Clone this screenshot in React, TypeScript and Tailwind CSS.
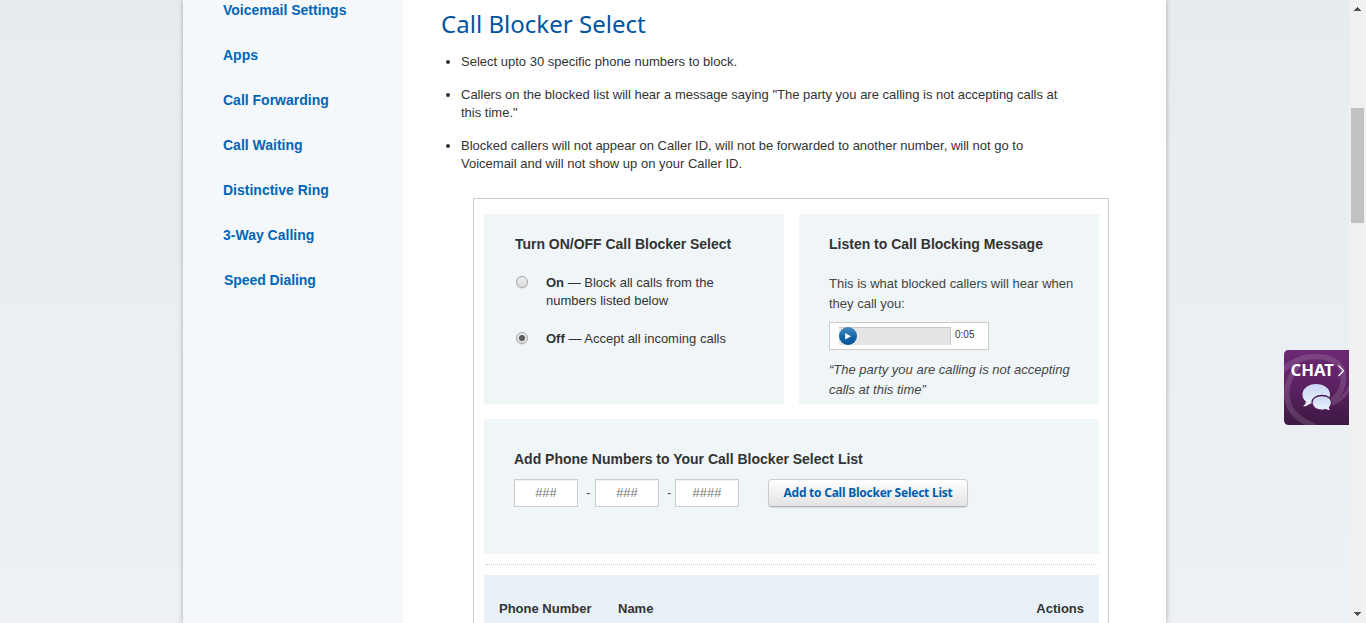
import type { ReactNode } from 'react';

const navItems = [
  'Voicemail Settings',
  'Apps',
  'Call Forwarding',
  'Call Waiting',
  'Distinctive Ring',
  '3-Way Calling',
  'Speed Dialing',
];

function Sidebar() {
  return (
    <nav className="h-full w-[220px] shrink-0 bg-[#f4f8fb] pl-10">
      <ul className="-mt-[12px]">
        {navItems.map((item) => (
          <li key={item} className="h-[45px] text-sm leading-[45px] font-bold whitespace-nowrap text-[#0066b8]">
            <a className={item === 'Speed Dialing' ? 'pl-px tracking-[-0.06px]' : ''}>{item}</a>
          </li>
        ))}
      </ul>
    </nav>
  );
}

function Bullet({ children }: { children: ReactNode }) {
  return (
    <li className="mb-[15px] flex">
      <span className="mt-[7px] mr-[11px] size-1 shrink-0 rounded-full bg-[#333]" />
      <span>{children}</span>
    </li>
  );
}

function Radio({ checked }: { checked?: boolean }) {
  return (
    <span className="flex size-3 shrink-0 items-center justify-center rounded-full border border-[#a6a6a6] bg-linear-to-b from-[#ececec] to-[#dcdcdc] shadow-[0_1px_1px_rgba(0,0,0,0.08)]">
      {checked && <span className="size-1.5 rounded-full bg-[#5c5c5c]" />}
    </span>
  );
}

function TogglePanel() {
  return (
    <section className="h-[190px] w-[300px] bg-[#f0f6f8] pt-[21px] pl-[31px]">
      <h2 className="text-sm leading-[18px] font-bold tracking-[-0.02px] whitespace-nowrap">Turn ON/OFF Call Blocker Select</h2>
      <div className="mt-[21px] flex pl-px">
        <div className="mt-[2px]"><Radio /></div>
        <p className="ml-[18px] text-[13px] leading-[18px] whitespace-nowrap">
          <b>On</b> — Block all calls from the
          <br />
          numbers listed below
        </p>
      </div>
      <div className="mt-5 flex pl-px">
        <div className="mt-[2px]"><Radio checked /></div>
        <p className="ml-[18px] text-[13px] leading-[18px] whitespace-nowrap">
          <b>Off</b> — Accept all incoming calls
        </p>
      </div>
    </section>
  );
}

function ListenPanel() {
  return (
    <section className="h-[190px] w-[300px] bg-[#f0f6f8] pt-[21px] pl-[30px] text-[#444]">
      <h2 className="text-sm leading-[18px] font-bold whitespace-nowrap text-[#333]">Listen to Call Blocking Message</h2>
      <p className="mt-[21px] text-[13px] leading-5 whitespace-nowrap">
        This is what blocked callers will hear when
        <br />
        they call you:
      </p>
      <div className="mt-2 flex h-7 w-40 border border-[#ccc] bg-white pt-1 pl-[9px]">
        <div className="h-[18px] w-28 border-t border-r border-[#c6c6c6] bg-[#e4e4e4]">
          <svg className="-mt-px block size-[18px]" viewBox="0 0 18 18">
            <defs>
              <linearGradient id="play" x1="0" y1="0" x2="0" y2="1">
                <stop offset="0" stopColor="#4489c0" />
                <stop offset="0.5" stopColor="#1669ab" />
                <stop offset="1" stopColor="#004f96" />
              </linearGradient>
            </defs>
            <circle cx="9" cy="9" r="9" fill="url(#play)" />
            <path d="M6.2 6 12 9.3 6.2 12.6Z" fill="#fff" />
          </svg>
        </div>
        <span className="ml-1 text-[10px] leading-[15px] text-[#333]">0:05</span>
      </div>
      <p className="mt-[10px] text-[13px] leading-5 whitespace-nowrap italic">
        “The party you are calling is not accepting
        <br />
        calls at this time”
      </p>
    </section>
  );
}

function DigitsInput({ placeholder }: { placeholder: string }) {
  return (
    <span className="h-7 w-16 border border-[#ccc] bg-white text-center text-[13px] leading-[26px] text-[#777] shadow-[inset_0_1px_1px_rgba(0,0,0,0.06)]">
      {placeholder}
    </span>
  );
}

function AddPanel() {
  return (
    <section className="mt-[15px] h-[135px] bg-[#f0f6f8] pt-[31px] pl-[30px]">
      <h2 className="text-sm leading-[18px] font-bold">Add Phone Numbers to Your Call Blocker Select List</h2>
      <div className="mt-[11px] flex text-[13px] leading-7 text-[#555]">
        <DigitsInput placeholder="###" />
        <span className="w-[17px] pl-[8px]">-</span>
        <DigitsInput placeholder="###" />
        <span className="w-4 pl-[8px]">-</span>
        <DigitsInput placeholder="####" />
        <button className="ml-[29px] h-7 w-[200px] rounded-[4px] border border-[#ccc] border-b-[#b0b0b0] bg-linear-to-b from-white to-[#e3e3e3] pb-px font-['Noto_Sans','Open_Sans',sans-serif] text-[12px] leading-[25px] font-bold tracking-[-0.24px] whitespace-nowrap text-[#005eb0] shadow-[0_1px_1px_rgba(0,0,0,0.1)]">
          Add to Call Blocker Select List
        </button>
      </div>
    </section>
  );
}

function ChatTab() {
  return (
    <div className="absolute top-[350px] right-[17px] h-[75px] w-[65px]">
      <svg className="block h-full w-full" viewBox="0 0 65 75">
        <defs>
          <linearGradient id="chatBg" x1="0" y1="0" x2="0" y2="1">
            <stop offset="0" stopColor="#6c2a73" />
            <stop offset="0.5" stopColor="#5c2263" />
            <stop offset="1" stopColor="#3d1a42" />
          </linearGradient>
          <linearGradient id="bubble" x1="0" y1="0" x2="0" y2="1">
            <stop offset="0" stopColor="#c9d6f2" />
            <stop offset="1" stopColor="#eef3fd" />
          </linearGradient>
          <clipPath id="tab">
            <path d="M5 0H65V75H5Q0 75 0 70V5Q0 0 5 0Z" />
          </clipPath>
        </defs>
        <g clipPath="url(#tab)">
          <rect width="65" height="75" fill="url(#chatBg)" />
          <g opacity="0.13" fill="none" stroke="#fff" strokeWidth="5.5">
            <path d="M-3 22C10 8 28 4 43 8C57 12 61 22 59 33C58 42 52 48 45 52" />
            <path d="M14 16C0 32 0 51 9 62C15 70 24 74 34 78" />
            <path d="M47 54C56 51 61 46 66 37" strokeWidth="3.5" />
          </g>
          <text x="6.5" y="26" textLength="43.5" lengthAdjust="spacingAndGlyphs" fill="#fff" fontFamily="Noto Sans, Open Sans, sans-serif" fontWeight="700" fontSize="16.5">
            CHAT
          </text>
          <path d="M54.5 15.5 59.5 20.7 54.5 26" fill="none" stroke="#fff" strokeWidth="1.2" />
          <path d="M32 34C40 34 46 38.5 46 44.5S40 54 32 54Q29 54 26.5 53.5Q23.5 56 19 56.5Q22 54 22 51.5Q18.5 49 18.5 44.5C18.5 38.5 24.5 34 32 34Z" fill="url(#bubble)" />
          <path d="M38 45.5C44 45.5 47.5 48.5 47.5 52.5Q47.500 55.5 45.5 57.5Q45.7 59.5 47.5 61Q44 61 41.5 59.5Q39.5 60.2 37.5 60.2C32 60.2 28 57 28 52.8S32 45.5 38 45.5Z" fill="url(#bubble)" stroke="#4f1a56" strokeWidth="1.3" />
        </g>
      </svg>
    </div>
  );
}

function Scrollbar() {
  return (
    <div className="flex h-full w-[17px] shrink-0 flex-col items-center bg-[#f0f0f0]">
      <svg className="mt-[7px] block h-1 w-[7px] shrink-0" viewBox="0 0 7 4" shapeRendering="crispEdges">
        <path d="M3 0H4V1H5V2H6V3H7V4H0V3H1V2H2V1H3Z" fill="#505050" />
      </svg>
      <div className="mt-[97px] h-[115px] w-[13px] bg-[#c1c1c1]" />
      <svg className="mt-auto mb-[7px] block h-1 w-[7px] shrink-0" viewBox="0 0 7 4" shapeRendering="crispEdges">
        <path d="M0 0H7V1H6V2H5V3H4V4H3V3H2V2H1V1H0Z" fill="#505050" />
      </svg>
    </div>
  );
}

export default function App() {
  return (
    <div className="relative flex h-[623px] w-[1366px] overflow-hidden bg-linear-to-b from-[#e7ecef] to-[#ecf1f5] font-['Liberation_Sans',Arial,sans-serif] text-[#333]">
      <div className="flex h-full flex-1 overflow-hidden pl-[183px]">
        <div className="flex h-full w-[983px] bg-white shadow-[0_0_5px_rgba(0,0,0,0.3)]">
          <Sidebar />
          <main className="w-[763px] pt-[9px] pl-[38px]">
            <h1 className="font-['Noto_Sans','Open_Sans',sans-serif] text-[24px] leading-[30px] tracking-[0.03px] whitespace-nowrap text-[#00549f]">Call Blocker Select</h1>
            <ul className="mt-[14px] ml-[5px] text-[13px] leading-[18px] whitespace-nowrap">
              <Bullet>Select upto 30 specific phone numbers to block.</Bullet>
              <Bullet>
                Callers on the blocked list will hear a message saying "The party you are calling is not accepting calls at
                <br />
                this time."
              </Bullet>
              <Bullet>
                Blocked callers will not appear on Caller ID, will not be forwarded to another number, will not go to
                <br />
                Voicemail and will not show up on your Caller ID.
              </Bullet>
            </ul>
            <div className="mt-[25px] ml-8 h-[440px] w-[636px] border border-[#ccc] pt-[15px] pr-[9px] pl-[10px]">
              <div className="flex gap-[15px]">
                <TogglePanel />
                <ListenPanel />
              </div>
              <AddPanel />
              <div className="mt-[10px] mr-[3px] ml-[2px] border-t border-dotted border-[#ccc]" />
              <div className="mt-[10px] flex h-[68px] bg-[#e9f1f8] px-[15px] text-[13px] leading-[68px] font-bold">
                <span className="w-[119px]">Phone Number</span>
                <span>Name</span>
                <span className="ml-auto">Actions</span>
              </div>
            </div>
          </main>
        </div>
      </div>
      <Scrollbar />
      <ChatTab />
    </div>
  );
}
